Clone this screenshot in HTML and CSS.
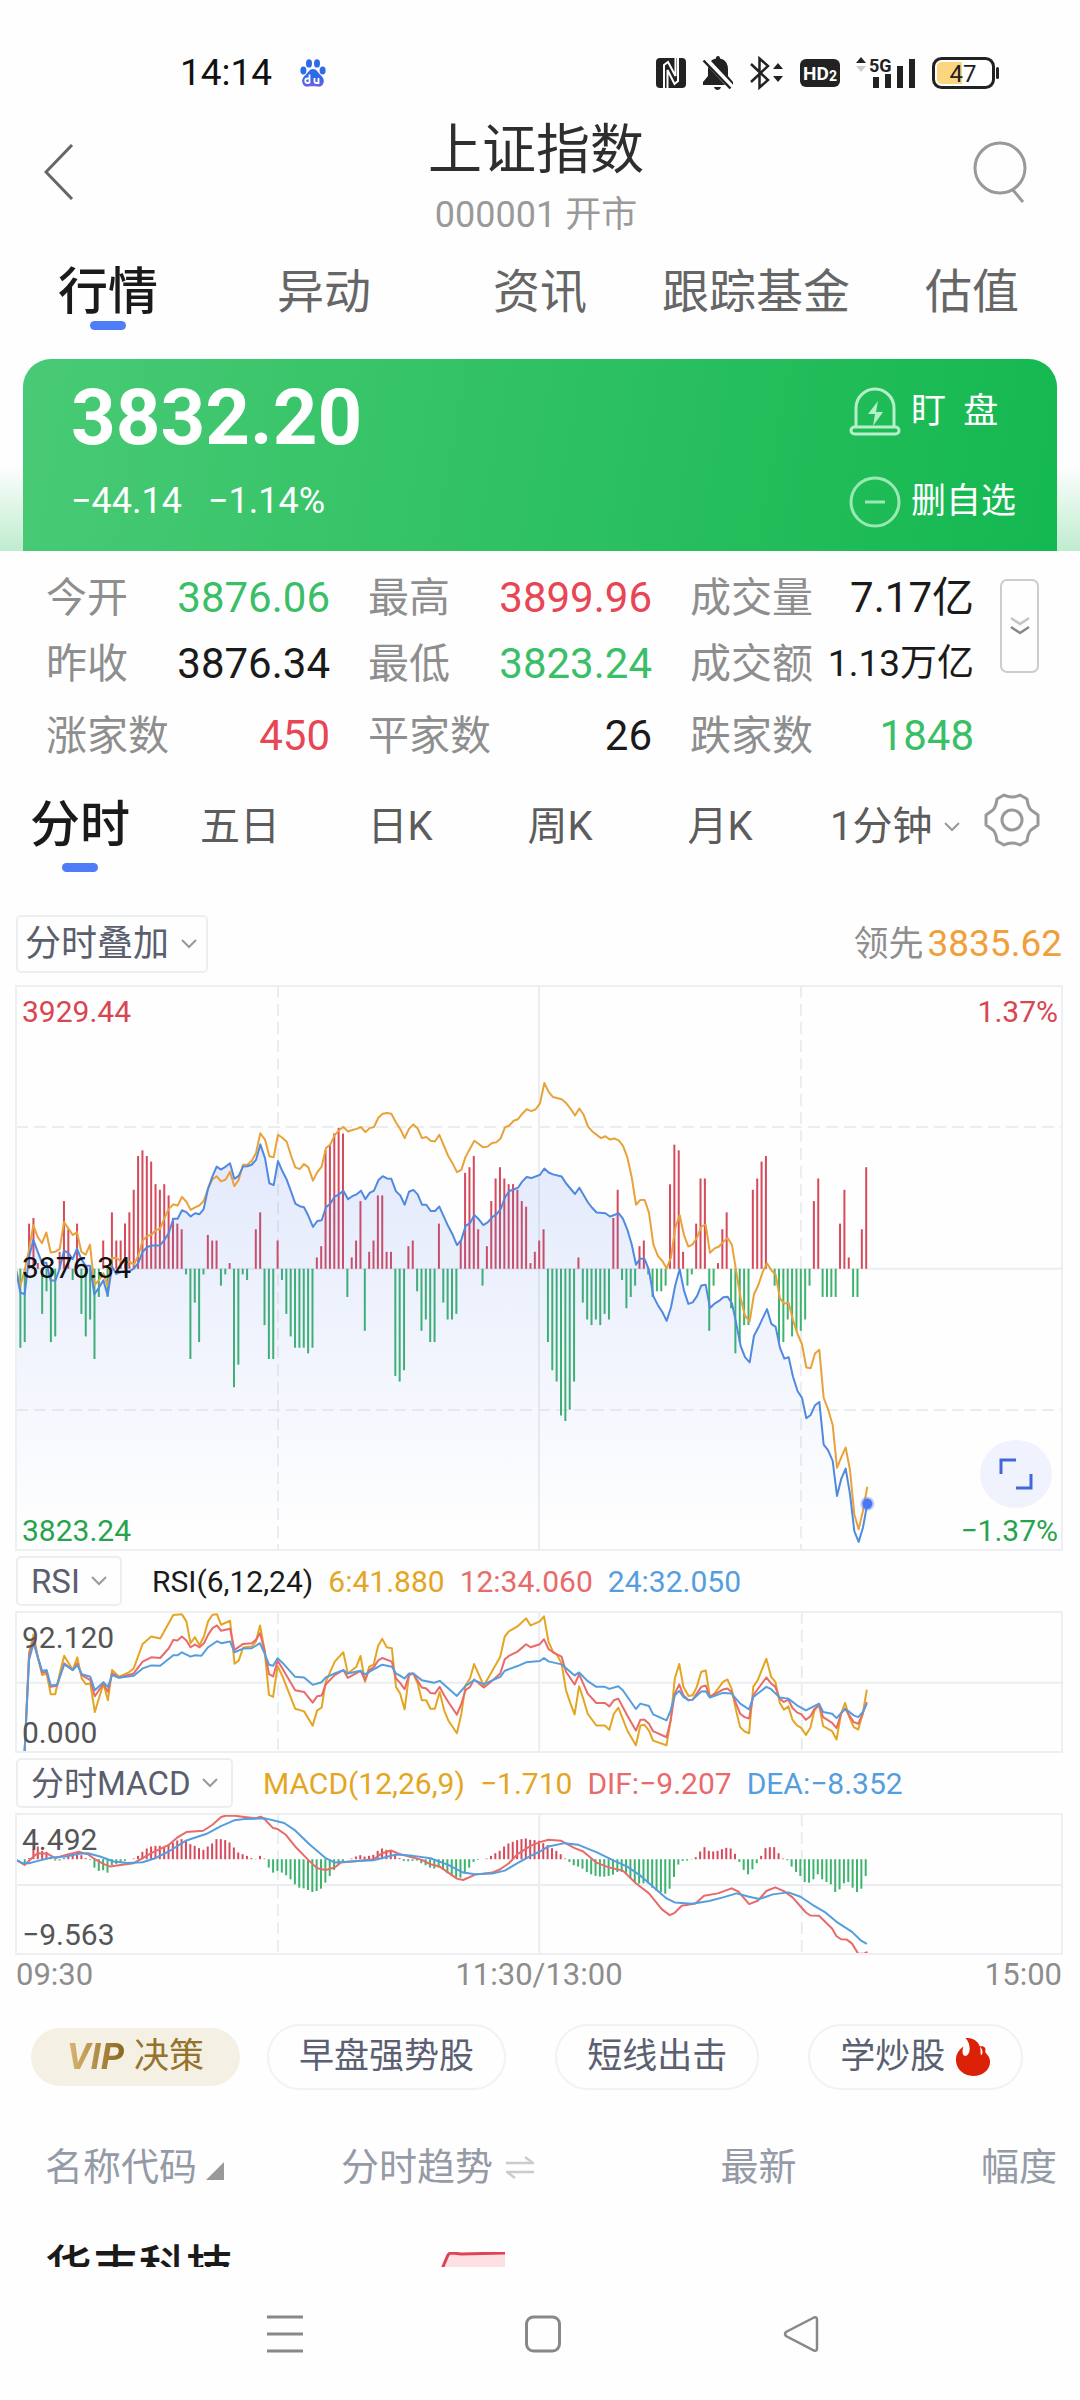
FILE: index.html
```html
<!DOCTYPE html>
<html lang="zh-CN">
<head>
    <meta charset="UTF-8">
    <meta name="viewport" content="width=device-width, initial-scale=1.0">
    <title>上证指数</title>
    <link rel="icon" href="data:,">
    <link rel="stylesheet" href="styles.css">
</head>
<body>
    <div class="status-bar">
        <span class="clock">14:14</span>
        <svg class="paw" width="26" height="28" viewBox="0 0 26 28">
            <defs>
                <linearGradient id="pawFill" x1="0" y1="0" x2="0" y2="1">
                    <stop offset="0.5" stop-color="#2f6be6"/>
                    <stop offset="1" stop-color="#7a5be8"/>
                </linearGradient>
            </defs>
            <g fill="#2f6be6">
                <ellipse cx="3.4" cy="11.5" rx="3" ry="4"/>
                <ellipse cx="9" cy="4.4" rx="3" ry="4.2"/>
                <ellipse cx="17" cy="4.4" rx="3" ry="4.2"/>
                <ellipse cx="22.6" cy="11.5" rx="3" ry="4"/>
            </g>
            <path d="M13 10c3.500 0 4.500 3 7 5.500 3 2.800 4.500 5 3.500 8.500-1 3.500-4 4-6 3.600-3-.6-6-.6-9 0-2 .4-5-.1-6-3.600-1-3.500.5-5.700 3.500-8.500C8.500 13 9.500 10 13 10z" fill="url(#pawFill)"/>
            <path d="M9.500 15.500v8.500M9.500 24H7.500a2 2 0 0 1 0-4.500h2M14.500 19v3.500q0 1.500 1.500 1.500h2.500v-5" fill="none" stroke="#fff" stroke-width="1.800"/>
        </svg>
        <div class="status-icons">
            <svg width="30" height="30" viewBox="0 0 30 30">
                <rect width="30" height="30" rx="4" fill="#222"/>
                <path d="M8 30V7l4-3 7.500 14V0M22 0v23l-3.500 3-7-14v18" fill="none" stroke="#fff" stroke-width="2"/>
            </svg>
            <svg width="32" height="34" viewBox="0 0 32 34">
                <path d="M16 0c1.500 0 2 1 2 2.500 5 1 8 5 8 10.500v7l5 6v3H1v-3l5-6v-7C6 7.500 9 3.500 14 2.500 14 1 14.500 0 16 0zM12 31h7c-.5 2-2 3-3.500 3S12.500 33 12 31z" fill="#222"/>
                <path d="M3 3l27 29" stroke="#fff" stroke-width="6"/>
                <path d="M1.500 4.500l27 28" stroke="#222" stroke-width="2.500"/>
            </svg>
            <svg width="34" height="34" viewBox="0 0 34 34">
                <path d="M1 8l17 16-8.500 7.500V2.500L18 10 1 26" fill="none" stroke="#222" stroke-width="2.500"/>
                <path d="M23 13l5-6 5 6zM23 20l5 6 5-6z" fill="#222"/>
            </svg>
            <svg width="40" height="28" viewBox="0 0 40 28">
                <rect width="40" height="28" rx="6" fill="#222"/>
                <text class="hd-text" x="3" y="21" font-size="19">HD</text>
                <text class="hd-text" x="29" y="22" font-size="14">2</text>
            </svg>
            <svg width="60" height="38" viewBox="0 0 60 38">
                <path d="M0 9l5-6 5 6z" fill="#222"/>
                <path d="M0 12l5 6 5-6z" fill="#ccc"/>
                <text class="net-text" x="13" y="18" font-size="18">5G</text>
                <path d="M20 23v11M32 20v14M44 12v22M56 5v29" stroke="#222" stroke-width="6"/>
            </svg>
            <svg width="68" height="32" viewBox="0 0 68 32">
                <rect x="1.500" y="1.500" width="60" height="29" rx="8" fill="#fff" stroke="#222" stroke-width="3"/>
                <path d="M10 5h20v22H10q-5 0-5-5V10q0-5 5-5z" fill="#fcd581"/>
                <rect x="64" y="10" width="3" height="12" rx="1.500" fill="#222"/>
                <text class="battery-text" x="31" y="25" font-size="24">47</text>
            </svg>
        </div>
    </div>

    <header class="header">
        <button class="icon-button" type="button" aria-label="返回">
            <svg width="30" height="56" viewBox="0 0 30 56"><path d="M28 1L2 28l26 27" fill="none" stroke="#666" stroke-width="3"/></svg>
        </button>
        <div class="header-title">
            <h1>上证指数</h1>
            <p>000001 开市</p>
        </div>
        <button class="icon-button" type="button" aria-label="搜索">
            <svg width="56" height="64" viewBox="0 0 56 64"><circle cx="28" cy="28" r="25" fill="none" stroke="#999" stroke-width="3"/><path d="M41 50l10 12" stroke="#999" stroke-width="3"/></svg>
        </button>
    </header>

    <nav class="tabs">
        <a class="active" href="#">行情</a>
        <a href="#">异动</a>
        <a href="#">资讯</a>
        <a href="#">跟踪基金</a>
        <a href="#">估值</a>
    </nav>

    <div class="card-wrap">
        <section class="card">
            <div>
                <div class="price">3832.20</div>
                <div class="change"><span>−44.14</span><span>−1.14%</span></div>
            </div>
            <div class="card-actions">
                <button type="button">
                    <svg width="52" height="52" viewBox="0 0 52 52">
                        <g fill="none" stroke="#b6efc9" stroke-width="3">
                            <path d="M7 42V22a19 19 0 0 1 38 0v20"/>
                            <rect x="2" y="41" width="48" height="7" rx="3.500"/>
                        </g>
                        <path d="M29 15L19 28h7l-2 12 10-14h-7z" fill="#b6efc9"/>
                    </svg>
                    <span>盯&nbsp; 盘</span>
                </button>
                <button type="button">
                    <svg width="52" height="52" viewBox="0 0 52 52"><circle cx="26" cy="26" r="24" fill="none" stroke="#9ae8b4" stroke-width="3"/><path d="M16 26h20" stroke="#9ae8b4" stroke-width="3"/></svg>
                    <span>删自选</span>
                </button>
            </div>
        </section>
    </div>

    <section class="quote">
        <dl class="stats">
            <div><dt>今开</dt><dd class="down">3876.06</dd></div>
            <div><dt>最高</dt><dd class="up">3899.96</dd></div>
            <div><dt>成交量</dt><dd>7.17亿</dd></div>
            <div><dt>昨收</dt><dd>3876.34</dd></div>
            <div><dt>最低</dt><dd class="down">3823.24</dd></div>
            <div><dt>成交额</dt><dd class="long">1.13万亿</dd></div>
            <div class="count"><dt>涨家数</dt><dd class="up">450</dd></div>
            <div class="count"><dt>平家数</dt><dd>26</dd></div>
            <div class="count"><dt>跌家数</dt><dd class="down">1848</dd></div>
        </dl>
        <button class="expand" type="button" aria-label="展开">
            <svg width="20" height="20" viewBox="0 0 20 20"><g fill="none" stroke-width="2.500"><path d="M1 2l9 6 9-6" stroke="#c4c4c4"/><path d="M1 11l9 6 9-6" stroke="#888"/></g></svg>
        </button>
    </section>

    <nav class="periods">
        <a class="active" href="#">分时</a>
        <a href="#">五日</a>
        <a href="#">日K</a>
        <a href="#">周K</a>
        <a href="#">月K</a>
        <span class="dropdown period-dropdown">
            <select aria-label="分钟周期"><option>1分钟</option></select>
            <svg width="16" height="10" viewBox="0 0 16 10"><path d="M1 1l7 7 7-7" fill="none" stroke="#999" stroke-width="2"/></svg>
        </span>
        <button class="icon-button settings" type="button" aria-label="设置">
            <svg width="56" height="56" viewBox="0 0 56 56">
                <g fill="none" stroke="#999" stroke-width="3" stroke-linejoin="round">
                    <circle cx="28" cy="28" r="10"/>
                    <path d="M20 3q8 4 16 0l7 4q1 8 4 11l7 5v10l-7 5q-3 3-4 11l-7 4q-8-4-16 0l-7-4q-1-8-4-11l-7-5V23l7-5q3-3 4-11z"/>
                </g>
            </svg>
        </button>
    </nav>

    <main class="charts">
        <div class="overlay-row">
            <span class="dropdown boxed overlay-dropdown">
                <select aria-label="叠加"><option>分时叠加</option></select>
                <svg width="16" height="10" viewBox="0 0 16 10"><path d="M1 1l7 7 7-7" fill="none" stroke="#999" stroke-width="2"/></svg>
            </span>
            <div class="leading">领先<b>3835.62</b></div>
        </div>

        <div class="chart price-chart">
            <svg viewBox="48 17 3138 1524" preserveAspectRatio="none">
                <defs>
                    <linearGradient id="areaFill" gradientUnits="userSpaceOnUse" x1="0" y1="445" x2="0" y2="1500">
                        <stop offset="0" stop-color="#4a76f0" stop-opacity="0.15"/>
                        <stop offset="1" stop-color="#4a76f0" stop-opacity="0"/>
                    </linearGradient>
                </defs>
                <path class="grid" d="M48 781H3186M1617 17V1541"/>
                <path class="grid dashed" d="M48 398H3186M48 1163H3186M834 17V1541M2403 17V1541"/>
                <g id="strengthBars"></g>
                <polygon id="priceArea" fill="url(#areaFill)"/>
                <polyline class="line orange" points="48,782 61,828 74,785 87,730 100,663 113,695 126,712 139,683 152,737 166,735 179,728 192,655 205,672 218,690 231,682 244,735 257,743 270,716 283,825 297,812 310,793 323,828 336,752 349,752 362,760 375,765 388,762 402,770 415,745 428,705 441,693 454,689 467,677 480,673 493,645 506,620 520,607 533,610 546,587 559,600 572,622 585,615 598,610 611,598 624,565 637,540 650,531 663,545 677,540 690,519 703,558 716,541 729,500 742,500 755,490 768,468 781,415 795,432 808,477 821,480 834,419 847,427 860,438 873,475 886,507 899,512 912,498 925,507 939,543 952,520 965,505 978,455 991,445 1004,420 1017,407 1030,398 1044,410 1057,406 1070,403 1083,398 1096,412 1109,401 1122,398 1135,373 1148,362 1161,360 1174,362 1188,386 1201,404 1214,428 1227,403 1240,391 1253,402 1266,428 1279,425 1292,435 1305,437 1318,419 1344,475 1357,495 1371,520 1384,514 1397,478 1423,435 1450,453 1463,451 1476,441 1489,439 1502,429 1515,399 1528,394 1541,381 1554,377 1567,362 1580,350 1594,355 1607,350 1620,334 1633,279 1646,303 1659,317 1685,323 1698,333 1711,348 1725,367 1738,348 1751,365 1764,397 1777,410 1803,428 1816,423 1830,432 1843,429 1856,434 1869,449 1882,480 1895,533 1908,608 1921,595 1934,595 1947,630 1960,715 1974,747 1987,760 2000,780 2013,750 2026,670 2039,636 2052,690 2065,721 2078,715 2091,697 2104,667 2117,662 2130,738 2144,726 2157,721 2170,708 2183,698 2196,717 2209,790 2222,860 2235,908 2249,923 2262,850 2275,825 2288,790 2301,766 2314,785 2327,797 2340,862 2353,875 2366,873 2379,920 2393,958 2406,985 2419,1048 2432,1050 2445,1010 2458,1000 2471,1130 2484,1160 2498,1203 2511,1319 2524,1290 2537,1264 2550,1325 2563,1445 2576,1485 2589,1435 2602,1370"/>
                <polyline id="priceLine" class="line blue" points="48,785 61,845 74,850 87,750 100,703 113,735 126,765 139,765 152,813 166,813 179,780 192,732 205,738 218,755 231,727 244,755 257,773 270,773 283,850 297,832 310,812 323,853 336,775 349,795 362,790 375,788 388,788 402,780 415,765 428,735 441,723 454,718 480,718 493,703 506,685 520,646 533,646 546,623 559,628 572,640 585,631 598,634 611,620 624,565 637,532 650,505 663,513 677,505 690,496 703,538 716,530 729,505 742,504 755,500 768,487 781,445 795,482 808,550 821,555 834,490 847,517 860,540 873,572 886,605 899,612 912,615 925,638 939,668 952,652 965,650 978,615 991,605 1004,586 1017,580 1030,570 1044,593 1057,585 1070,580 1083,570 1096,593 1109,576 1122,570 1135,542 1148,531 1161,537 1174,538 1188,572 1201,583 1214,608 1227,573 1240,568 1253,580 1266,608 1279,608 1292,625 1305,625 1318,613 1344,665 1357,687 1371,717 1384,703 1397,665 1410,658 1423,636 1437,648 1450,663 1463,656 1476,642 1489,634 1502,620 1515,588 1528,571 1541,567 1554,562 1567,545 1580,533 1594,536 1620,527 1633,510 1646,521 1659,526 1685,532 1698,550 1725,579 1738,562 1764,602 1777,617 1790,629 1816,631 1830,640 1856,631 1869,646 1882,675 1895,715 1908,770 1921,753 1934,755 1947,785 1960,855 1974,880 1987,898 2000,922 2013,885 2026,825 2039,782 2052,840 2065,876 2078,872 2091,855 2104,826 2117,824 2130,887 2144,875 2157,868 2170,858 2183,857 2196,875 2209,930 2222,990 2235,1020 2249,1034 2262,962 2275,940 2301,890 2314,930 2327,938 2340,995 2353,1024 2366,1020 2379,1073 2393,1112 2406,1130 2419,1185 2432,1176 2445,1150 2458,1141 2471,1256 2484,1271 2498,1300 2511,1395 2524,1348 2537,1321 2550,1390 2563,1490 2576,1519 2589,1480 2602,1415"/>
                <ellipse cx="2602" cy="1416" rx="21" ry="19" fill="#5580f5" fill-opacity="0.4"/>
                <ellipse cx="2602" cy="1416" rx="15" ry="14" fill="#4a78f5"/>
            </svg>
            <span class="label top left up">3929.44</span>
            <span class="label top right up">1.37%</span>
            <span class="label middle left">3876.34</span>
            <span class="label bottom left down">3823.24</span>
            <span class="label bottom right down">−1.37%</span>
            <button class="fullscreen" type="button" aria-label="全屏">
                <svg width="34" height="34" viewBox="0 0 34 34"><path d="M17 3H2v14M17 31h15V17" fill="none" stroke="#4267db" stroke-width="3"/></svg>
            </button>
        </div>

        <div class="indicator-row">
            <span class="dropdown boxed">
                <select aria-label="指标一"><option>RSI</option></select>
                <svg width="16" height="10" viewBox="0 0 16 10"><path d="M1 1l7 7 7-7" fill="none" stroke="#999" stroke-width="2"/></svg>
            </span>
            <div class="legend">
                <span>RSI(6,12,24)</span>
                <span class="c-yellow">6:41.880</span>
                <span class="c-red">12:34.060</span>
                <span class="c-blue">24:32.050</span>
            </div>
        </div>
        <div class="chart sub-chart">
            <svg viewBox="46 217 3039 417" preserveAspectRatio="none">
                <path class="grid" d="M46 428H3085M1566 217V634"/>
                <path class="grid dashed" d="M807 217V634M2329 217V634"/>
                <polyline class="line yellow" points="59,634 71,634 84,340 97,284 109,350 122,405 135,400 147,462 160,462 173,400 186,347 211,390 224,352 237,415 249,432 262,430 275,515 300,430 313,480 325,390 345,410 375,396 388,385 401,348 414,312 439,290 465,296 503,226 528,224 541,245 553,310 566,292 579,316 592,290 604,245 617,225 630,224 642,255 668,243 681,371 693,362 706,323 731,320 743,305 755,257 768,330 781,464 793,470 806,378 820,408 857,505 883,513 908,556 921,510 934,502 946,425 972,365 997,337 1010,400 1035,380 1047,348 1060,425 1072,380 1085,374 1098,318 1110,297 1123,322 1138,325 1150,440 1162,460 1175,507 1188,405 1200,400 1213,430 1225,480 1238,480 1250,505 1263,505 1277,455 1290,510 1302,540 1327,578 1340,520 1352,435 1365,415 1377,372 1390,402 1405,436 1420,410 1453,350 1466,290 1478,275 1503,260 1528,236 1541,257 1568,245 1580,230 1593,305 1606,335 1618,345 1631,370 1644,450 1656,487 1669,522 1682,438 1694,475 1707,520 1732,555 1757,555 1770,568 1783,520 1796,502 1809,535 1822,570 1847,614 1860,555 1872,553 1885,570 1897,600 1936,614 1948,540 1960,415 1973,372 1985,440 2000,467 2012,465 2024,440 2037,395 2050,391 2062,470 2075,460 2088,442 2100,425 2113,418 2125,445 2138,510 2150,560 2163,573 2176,578 2188,440 2201,420 2226,356 2240,410 2252,425 2265,487 2277,508 2290,498 2302,538 2315,555 2328,563 2341,583 2354,562 2366,510 2379,493 2391,557 2417,572 2430,597 2443,520 2455,488 2467,530 2480,560 2493,567 2506,520 2518,448"/>
                <polyline class="line red" points="59,634 71,634 84,345 97,300 109,350 122,398 135,395 147,440 165,437 186,370 211,390 224,370 237,405 262,420 275,468 300,430 313,455 325,400 345,412 388,400 414,365 439,352 465,354 490,325 503,300 515,302 528,290 541,302 553,322 566,314 579,322 592,310 604,285 617,265 630,257 642,273 668,267 681,330 706,312 731,310 743,300 755,280 768,330 781,402 793,409 806,362 820,385 857,450 883,455 908,487 921,468 934,466 946,432 972,405 997,390 1010,413 1047,392 1060,420 1072,390 1085,382 1098,362 1110,354 1138,365 1150,415 1162,428 1175,447 1188,405 1200,400 1225,442 1238,445 1250,458 1263,460 1277,440 1290,465 1302,485 1327,523 1340,490 1352,450 1365,440 1377,418 1405,442 1420,430 1453,400 1466,358 1478,348 1503,335 1528,313 1541,322 1568,313 1580,298 1593,327 1606,337 1631,350 1644,395 1669,433 1682,403 1707,460 1732,488 1757,488 1770,498 1783,480 1796,475 1822,525 1847,570 1860,538 1872,538 1885,550 1897,572 1936,590 1948,540 1960,460 1973,433 1985,465 2000,480 2012,478 2037,440 2050,436 2062,470 2100,448 2113,445 2125,455 2138,490 2150,520 2163,530 2176,534 2188,465 2226,412 2240,430 2252,440 2265,475 2277,485 2290,478 2302,503 2315,516 2328,522 2341,538 2354,528 2366,505 2379,495 2391,530 2417,547 2430,563 2443,520 2455,505 2467,525 2480,545 2493,550 2506,520 2518,485"/>
                <polyline class="line sky" points="59,634 71,634 84,360 97,310 109,350 122,393 135,390 147,436 165,434 186,373 211,390 224,375 237,402 262,410 275,450 300,426 313,440 325,405 345,413 388,407 414,385 439,376 465,377 503,346 515,346 528,337 553,350 566,346 585,347 604,322 630,304 642,310 668,305 681,337 706,326 731,325 755,310 768,340 781,374 793,377 806,355 820,368 857,410 883,412 908,434 934,426 946,412 972,400 997,390 1010,400 1047,392 1060,403 1085,388 1110,374 1138,380 1150,400 1175,415 1188,400 1200,400 1225,420 1260,428 1277,422 1327,467 1352,437 1377,420 1405,432 1453,410 1466,392 1503,378 1528,367 1568,363 1580,354 1593,364 1631,373 1669,406 1682,397 1707,423 1732,440 1757,440 1770,446 1796,438 1809,450 1847,506 1860,490 1885,497 1897,522 1936,540 1948,510 1960,465 1973,452 1985,470 2000,480 2012,478 2037,454 2050,453 2062,472 2100,458 2125,460 2150,490 2176,507 2188,470 2226,440 2240,447 2265,472 2290,475 2315,495 2341,510 2379,490 2391,515 2417,520 2430,533 2455,505 2480,525 2493,530 2506,515 2518,490"/>
            </svg>
            <span class="label top left">92.120</span>
            <span class="label bottom left">0.000</span>
        </div>

        <div class="indicator-row">
            <span class="dropdown boxed">
                <select aria-label="指标二"><option>分时MACD</option></select>
                <svg width="16" height="10" viewBox="0 0 16 10"><path d="M1 1l7 7 7-7" fill="none" stroke="#999" stroke-width="2"/></svg>
            </span>
            <div class="legend">
                <span class="c-yellow">MACD(12,26,9)</span>
                <span class="c-yellow">−1.710</span>
                <span class="c-red">DIF:−9.207</span>
                <span class="c-blue">DEA:−8.352</span>
            </div>
        </div>
        <div class="chart sub-chart">
            <svg viewBox="46 823 3039 418" preserveAspectRatio="none">
                <path class="grid" d="M46 1035H3085M1566 823V1241"/>
                <path class="grid dashed" d="M807 823V1241M2329 823V1241"/>
                <g id="macdBars"></g>
                <polyline class="line red" points="46,960 71,975 97,950 109,940 138,942 160,955 190,945 230,936 255,943 275,958 300,972 320,980 350,975 388,970 414,955 439,940 490,915 515,893 541,877 590,873 617,855 642,832 655,828 680,828 710,832 740,836 757,831 770,840 793,865 806,868 830,885 857,920 895,960 921,985 946,990 972,983 990,968 1030,964 1085,958 1110,940 1135,932 1160,942 1188,950 1225,960 1250,973 1277,980 1302,998 1327,1016 1345,1020 1380,1004 1430,998 1453,988 1478,970 1503,943 1541,918 1568,907 1593,900 1630,903 1669,925 1694,935 1732,968 1770,983 1809,992 1847,1030 1885,1060 1922,1107 1945,1125 1960,1118 1980,1097 2020,1090 2045,1067 2085,1060 2125,1045 2145,1055 2176,1092 2201,1082 2226,1053 2252,1042 2280,1055 2302,1072 2341,1117 2354,1126 2379,1127 2417,1165 2430,1188 2443,1197 2460,1198 2475,1210 2493,1240 2510,1240 2520,1235"/>
                <polyline class="line sky" points="46,960 65,970 84,970 110,963 150,953 190,950 230,942 255,940 290,950 330,965 370,969 414,967 450,955 490,935 541,902 600,882 640,860 680,842 710,838 770,836 825,850 857,872 900,915 946,955 972,968 1030,964 1085,961 1150,944 1200,948 1250,955 1302,975 1345,998 1380,1003 1430,1001 1466,992 1503,970 1541,948 1568,935 1593,920 1640,910 1680,915 1732,937 1783,962 1822,980 1860,1007 1897,1040 1936,1075 1960,1087 2010,1091 2060,1083 2100,1072 2140,1060 2176,1070 2205,1077 2245,1063 2290,1057 2325,1070 2360,1094 2395,1115 2430,1145 2475,1175 2500,1200 2518,1211"/>
            </svg>
            <span class="label top left">4.492</span>
            <span class="label bottom left">−9.563</span>
        </div>
        <div class="times"><span>09:30</span><span>11:30/13:00</span><span>15:00</span></div>
    </main>

    <div class="chips">
        <button class="chip vip" type="button"><i>VIP</i> <span>决策</span></button>
        <button class="chip" type="button">早盘强势股</button>
        <button class="chip" type="button">短线出击</button>
        <button class="chip" type="button">学炒股
            <svg width="36" height="40" viewBox="0 0 38 42"><path d="M11 1c9-1 17 5 16 16 0 3 2 2 2-1 0-3-1-4-3-6 4-1 7 1 6 4-1 4 5 5 5 12 0 9-8 15-18 15S1 34 1 24c0-7 4-11 8-14-2 5-1 10 2 10 6-1 6-13 0-19z" fill="#dc2108"/></svg>
        </button>
    </div>

    <section class="list">
        <table>
            <thead>
                <tr>
                    <th class="name">名称代码 <svg width="18" height="18" viewBox="0 0 18 18"><path d="M18 0v18H0z" fill="#999"/></svg></th>
                    <th class="trend">分时趋势 <svg class="swap" width="28" height="24" viewBox="0 0 28 24"><path d="M0 7h27l-8-6M28 16H1l8 6" fill="none" stroke="#ccc" stroke-width="2.500"/></svg></th>
                    <th class="number">最新</th>
                    <th class="number">幅度</th>
                </tr>
            </thead>
            <tbody>
                <tr>
                    <td class="name">华丰科技</td>
                    <td class="trend"><svg class="spark" width="66" height="50" viewBox="0 0 66 50"><path d="M0 22L8 3q1-2 4-2h54v49H0z" fill="#fde0e3"/><path d="M0 24L9 3q1-2 4-2l9 1 44-1" fill="none" stroke="#dd4456" stroke-width="3"/></svg></td>
                    <td></td>
                    <td></td>
                </tr>
            </tbody>
        </table>
    </section>

    <nav class="system-nav">
        <button class="icon-button" type="button" aria-label="最近任务"><svg width="36" height="38" viewBox="0 0 36 38"><path d="M0 2h36M0 19h36M0 36h36" stroke="#888" stroke-width="3"/></svg></button>
        <button class="icon-button" type="button" aria-label="主屏幕"><svg width="36" height="38" viewBox="0 0 36 38"><rect x="1.500" y="2" width="33" height="34" rx="7" fill="none" stroke="#888" stroke-width="3"/></svg></button>
        <button class="icon-button" type="button" aria-label="后退"><svg width="36" height="38" viewBox="0 0 36 38"><path d="M31 2.500L3 17q-2 2 0 4l28 14.500q3 1 3-2v-29q0-3-3-2z" fill="none" stroke="#888" stroke-width="2.500"/></svg></button>
    </nav>

    <script src="charts.js"></script>
</body>
</html>
```

FILE: styles.css
```css
* {
    box-sizing: border-box;
}
body {
    display: flex;
    flex-direction: column;
    height: 100vh;
    margin: 0;
    overflow: hidden;
    background: #fefefe;
    color: #1a1a1a;
    font-family: Roboto, "Noto Sans CJK SC", sans-serif;
}
body > * {
    flex-shrink: 0;
}
h1, p, dl, dd {
    margin: 0;
    font-weight: 400;
}
a {
    color: inherit;
    text-decoration: none;
}
button, select {
    margin: 0;
    padding: 0;
    border: none;
    background: none;
    color: inherit;
    font: inherit;
    cursor: pointer;
}
svg {
    display: block;
}
.icon-button {
    display: flex;
    align-items: center;
    justify-content: center;
}
.up {
    color: #e84555;
}
.down {
    color: #3abf68;
}

/* status bar */
.status-bar {
    display: flex;
    align-items: center;
    padding: 52px 80px 0 180px;
}
.clock {
    font-size: 37px;
    line-height: 42px;
    color: #111;
}
.paw {
    margin-left: 28px;
}
.status-icons {
    display: flex;
    align-items: center;
    gap: 16px;
    margin-left: auto;
}
.hd-text, .net-text {
    font-weight: 700;
}
.hd-text {
    fill: #fff;
}
.net-text {
    fill: #222;
}
.battery-text {
    text-anchor: middle;
    fill: #222;
}

/* header */
.header {
    display: flex;
    align-items: center;
    justify-content: space-between;
    padding: 24px 52px 0 44px;
}
.header .icon-button {
    margin-bottom: 10px;
}
.header-title {
    display: flex;
    flex-direction: column;
    gap: 10px;
    margin-left: 26px;
    text-align: center;
}
.header-title h1 {
    font-size: 54px;
    line-height: 66px;
    color: #2e2e2e;
}
.header-title p {
    font-size: 36px;
    line-height: 42px;
    color: #999;
}

/* tabs */
.tabs {
    display: flex;
    padding-top: 27px;
}
.tabs a {
    flex: 1;
    font-size: 47px;
    line-height: 58px;
    text-align: center;
    color: #666;
}
.tabs .active, .periods .active {
    font-size: 50px;
    font-weight: 500;
    color: #1a1a1a;
}
.active::after {
    content: "";
    display: block;
    width: 36px;
    height: 9px;
    margin: 0 auto;
    border-radius: 5px;
    background: #4f7df8;
}

/* price card */
.card-wrap {
    margin-top: 29px;
    padding: 0 23px;
    background: linear-gradient(#fefefe 55%, #bfeccf);
}
.card {
    display: flex;
    justify-content: space-between;
    height: 192px;
    padding: 18px 41px 0 48px;
    border-radius: 28px 28px 0 0;
    background: linear-gradient(100deg, #49ca75, #14b850);
    color: #fff;
}
.price {
    font-size: 78px;
    font-weight: 700;
    line-height: 82px;
}
.change {
    display: flex;
    gap: 26px;
    margin-top: 20px;
    font-size: 36px;
    line-height: 44px;
}
.card-actions {
    display: flex;
    flex-direction: column;
    gap: 36px;
    padding-top: 8px;
}
.card-actions button {
    display: flex;
    align-items: center;
    gap: 10px;
    font-size: 35px;
    line-height: 54px;
}

/* statistics */
.quote {
    display: flex;
    align-items: flex-start;
    justify-content: space-between;
    padding: 14px 41px 0 46px;
}
.stats {
    display: grid;
    grid-template-columns: repeat(3, 1fr);
    column-gap: 38px;
    flex: 1;
    margin-right: 26px;
}
.stats div {
    display: flex;
    justify-content: space-between;
    font-size: 42px;
    line-height: 66px;
    white-space: nowrap;
}
.stats .count {
    margin-top: 6px;
}
.stats dt {
    font-size: 41px;
    color: #8e8e8e;
}
.stats .long {
    font-size: 37px;
}
.expand {
    display: flex;
    align-items: center;
    justify-content: center;
    width: 39px;
    height: 94px;
    margin-top: 14px;
    border: 2px solid #ccc;
    border-radius: 7px;
}

/* period tabs */
.periods {
    display: flex;
    align-items: flex-start;
    height: 146px;
    padding-top: 26px;
    font-size: 40px;
    line-height: 64px;
    color: #5c5c5c;
}
.periods > * {
    flex: 1;
    text-align: center;
}
.periods .active {
    line-height: 60px;
}
.periods .active::after {
    margin-top: 8px;
}
.periods .settings {
    flex: none;
    width: 120px;
    height: 50px;
    padding-right: 16px;
}

/* drop-downs, the arrow shares the grid cell with the select */
.dropdown {
    display: inline-grid;
    align-items: center;
}
.dropdown > * {
    grid-area: 1 / 1;
}
.dropdown svg {
    justify-self: end;
    pointer-events: none;
}
.dropdown select {
    appearance: none;
    padding-right: 27px;
}
.period-dropdown {
    justify-content: end;
}
.boxed {
    padding: 0 13px;
    border: 2px solid #eceef1;
    border-radius: 5px;
    color: #5b5e6d;
}
.overlay-dropdown {
    height: 58px;
    padding: 0 9px 0 7px;
    font-size: 36px;
}

/* charts */
.charts {
    padding: 0 18px 0 16px;
}
.overlay-row {
    display: flex;
    align-items: center;
    justify-content: space-between;
    margin-bottom: 13px;
}
.leading {
    font-size: 35px;
    line-height: 56px;
    color: #8e8e8e;
}
.leading b {
    margin-left: 4px;
    font-size: 37px;
    font-weight: 400;
    color: #efa03a;
}
.chart {
    position: relative;
    outline: 2px solid #eeeff2;
    outline-offset: -1px;
    color: #555;
}
.chart > svg {
    width: 100%;
    height: 100%;
    overflow: visible;
}
.price-chart {
    height: 564px;
    color: #111;
}
.sub-chart {
    height: 140px;
}
.grid, .line, .bar {
    fill: none;
    vector-effect: non-scaling-stroke;
}
.grid {
    stroke: #ebedf0;
    stroke-width: 2px;
}
.dashed {
    stroke-dasharray: 12px 6px;
}
.line {
    stroke-width: 2px;
    stroke-linejoin: round;
}
.bar {
    stroke-width: 2px;
}
.orange {
    stroke: #e9a23b;
}
.blue {
    stroke: #5189e0;
}
.yellow {
    stroke: #e3a623;
}
.red {
    stroke: #e86a6a;
}
.sky {
    stroke: #559ede;
}
.bar.rise {
    stroke: #d64a5c;
}
.bar.fall {
    stroke: #3db36e;
}
.label {
    position: absolute;
    font-size: 30px;
    line-height: 36px;
}
.label.up {
    color: #d94550;
}
.label.down {
    color: #27a34d;
}
.label.left {
    left: 6px;
}
.label.right {
    right: 4px;
}
.label.top {
    top: 8px;
}
.label.middle {
    top: 50%;
    margin-top: -18px;
}
.label.bottom {
    bottom: 1px;
}
.fullscreen {
    position: absolute;
    right: 10px;
    bottom: 42px;
    display: flex;
    align-items: center;
    justify-content: center;
    width: 72px;
    height: 68px;
    border-radius: 50%;
    background: #f0f3fd;
}
.indicator-row {
    display: flex;
    align-items: center;
    gap: 30px;
    padding: 6px 0;
}
.indicator-row .dropdown {
    height: 50px;
    font-size: 33px;
}
.legend {
    display: flex;
    gap: 15px;
    font-size: 30px;
}
.c-yellow {
    color: #e3a623;
}
.c-red {
    color: #e86a6a;
}
.c-blue {
    color: #559ede;
}
.times {
    display: flex;
    justify-content: space-between;
    font-size: 31px;
    line-height: 42px;
    color: #8d8d8d;
}

/* chips */
.chips {
    display: flex;
    align-items: center;
    margin-top: 28px;
    padding-left: 31px;
}
.chip {
    display: flex;
    align-items: center;
    gap: 10px;
    height: 66px;
    margin-left: 49px;
    padding: 0 30px;
    border: 2px solid #f0f2f9;
    border-radius: 33px;
    font-size: 35px;
    line-height: 56px;
    color: #5a6072;
}
.chip.vip {
    gap: 7px;
    height: 58px;
    margin-left: 0;
    padding: 0 36px;
    border: none;
    background: #f5f0e4;
    color: #94732c;
}
.vip i {
    padding-right: 3px;
    background: linear-gradient(90deg, #dcb872, #86631d);
    background-clip: text;
    color: transparent;
    font-size: 37px;
    font-weight: 700;
}
.vip + .chip {
    margin-left: 27px;
}

/* stock list */
.list {
    flex: 1 1 0;
    min-height: 0;
    overflow: hidden;
    padding: 52px 23px 0 45px;
}
.list table {
    width: 100%;
    table-layout: fixed;
    border-collapse: collapse;
}
.list th, .list td {
    padding: 0;
    text-align: left;
    vertical-align: top;
    white-space: nowrap;
}
.list th {
    height: 94px;
    font-size: 38px;
    font-weight: 400;
    line-height: 50px;
    color: #959ba6;
}
.list th svg {
    display: inline-block;
}
.list .name {
    width: 296px;
}
.list .trend {
    width: 195px;
}
.list .swap {
    margin-left: 4px;
}
.list td {
    font-size: 47px;
    font-weight: 500;
    line-height: 64px;
}
.list .number {
    text-align: right;
}
.list .spark {
    margin: 16px 0 0 98px;
}

/* system navigation */
.system-nav {
    display: flex;
    justify-content: center;
    gap: 222px;
    height: 133px;
    padding: 48px 0 0 6px;
}
.system-nav .icon-button {
    height: 38px;
}
```

FILE: charts.js
```javascript
const SVG_NS = 'http://www.w3.org/2000/svg';

// one value per minute since 09:30
const strength = [
    -22, -14, -13, 8, 9, 1, -8, -4, -13, -12, 3, 12, 7, -2, 8, -8, -12, -9, -16, -5,
    5, -5, 10, 5, 5, 8, 10, 14, 20, 21, 20, 19, 15, 14, 15, 13, 9, 8, 7, -1,
    -16, -6, -13, -1, 6, 5, 5, -3, -1, 1, -21, -17, -1, -2, 0, 7, 10, -10, -16, -16,
    5, -2, -8, -12, -14, -14, -14, -15, -14, 2, 4, 21, 22, 24, 25, 24, -5, 2, 5, 12,
    -11, 3, 5, 13, 13, 3, 3, -19, -20, -18, 4, 5, -4, -11, -9, -13, -13, 8, -6, -9,
    -9, -8, 5, 17, 18, 20, 7, -3, 4, 12, 16, 18, 16, 15, 15, 14, 12, 11, 1, 3,
    5, 7, -13, -18, -20, -26, -27, -25, -20, 2, -6, -9, -10, -9, -10, -8, -9, 9, 14, -2,
    -7, -5, -3, 4, 5, -1, -5, -4, -4, -3, 15, 22, 21, 3, -3, -1, 8, 16, 16, -11,
    -3, 1, 7, 10, -7, -15, -13, -10, -10, 14, 16, 19, 20, 0, -3, -13, -13, -9, -12, -11,
    -11, -9, -3, 12, 16, -5, -5, -5, -5, 8, 14, 2, -5, -5, 7, 18
];

const macd = [
    0, 0, -12, 3, 30, 38, 25, 22, 5, -4, -4, 3, 8, 15, 22, 12, 3, -2, -25, -35,
    -33, -40, -18, -14, -8, -5, 0, 2, 10, 22, 32, 38, 40, 40, 38, 42, 50, 56, 60, 55,
    45, 40, 33, 28, 38, 47, 60, 60, 57, 50, 35, 20, 15, 10, 3, 1, 10, 2, -25, -40,
    -35, -40, -48, -60, -75, -85, -87, -92, -98, -95, -88, -70, -50, -32, -15, -6, 0, 2, 8, 12,
    8, 10, 13, 25, 32, 28, 25, 14, 3, -5, -6, -5, -4, -12, -18, -25, -28, -25, -32, -42,
    -50, -55, -55, -42, -25, -8, -2, 0, 2, 10, 18, 25, 38, 47, 52, 57, 60, 62, 58, 57,
    55, 48, 42, 33, 25, 15, 2, -8, -18, -22, -28, -38, -45, -50, -52, -52, -50, -46, -38, -38,
    -45, -58, -68, -73, -72, -72, -85, -95, -98, -103, -88, -53, -16, -5, -4, -1, 6, 23, 36, 25,
    23, 25, 30, 34, 32, 16, -8, -32, -45, -30, -12, 10, 33, 36, 36, 18, 2, -3, -22, -38,
    -50, -68, -70, -60, -45, -60, -68, -75, -98, -90, -72, -68, -85, -98, -88, -50
];

function drawBars(id, values, left, step, zero, unit) {
    const group = document.getElementById(id);
    values.forEach((value, i) => {
        if (value === 0) return;
        const bar = document.createElementNS(SVG_NS, 'path');
        bar.setAttribute('class', 'bar ' + (value > 0 ? 'rise' : 'fall'));
        bar.setAttribute('d', `M${left + i * step} ${zero}V${zero - value * unit}`);
        group.appendChild(bar);
    });
}

drawBars('strengthBars', strength, 48, 13.08, 781, 15.24);
drawBars('macdBars', macd, 46, 12.66, 958, 1);

// fill under the price line down to the bottom of the chart
const points = document.getElementById('priceLine').getAttribute('points');
document.getElementById('priceArea').setAttribute('points', `48,1541 ${points} 2602,1541`);
```
